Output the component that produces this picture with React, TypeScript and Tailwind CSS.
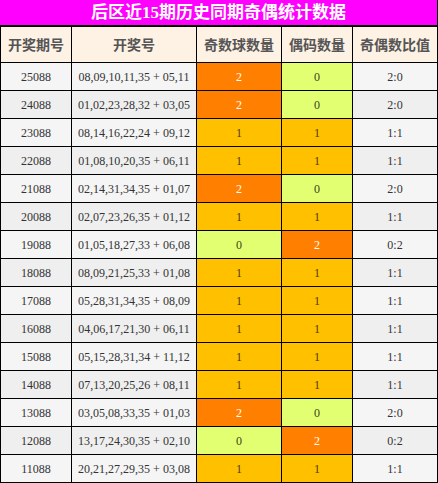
const rows: [string, string, number, number][] = [
  ["25088", "08,09,10,11,35 + 05,11", 2, 0],
  ["24088", "01,02,23,28,32 + 03,05", 2, 0],
  ["23088", "08,14,16,22,24 + 09,12", 1, 1],
  ["22088", "01,08,10,20,35 + 06,11", 1, 1],
  ["21088", "02,14,31,34,35 + 01,07", 2, 0],
  ["20088", "02,07,23,26,35 + 01,12", 1, 1],
  ["19088", "01,05,18,27,33 + 06,08", 0, 2],
  ["18088", "08,09,21,25,33 + 01,08", 1, 1],
  ["17088", "05,28,31,34,35 + 08,09", 1, 1],
  ["16088", "04,06,17,21,30 + 06,11", 1, 1],
  ["15088", "05,15,28,31,34 + 11,12", 1, 1],
  ["14088", "07,13,20,25,26 + 08,11", 1, 1],
  ["13088", "03,05,08,33,35 + 01,03", 2, 0],
  ["12088", "13,17,24,30,35 + 02,10", 0, 2],
  ["11088", "20,21,27,29,35 + 03,08", 1, 1],
];

const countCell = (n: number) => {
  if (n === 2) return "bg-[#ff8000] text-white";
  if (n === 1) return "bg-[#ffc000] text-[#4a3a10]";
  return "bg-[#e2ff72] text-[#3c4420]";
};

const cols = "grid grid-cols-[71px_125px_85px_71px_85px]";
const cell = "flex items-center justify-center border-r border-b border-black";

export default function App() {
  return (
    <div
      className="w-[438px] bg-white"
      style={{ fontFamily: '"Liberation Serif", "Noto Sans CJK SC", serif' }}
    >
      <div className="h-[27px] bg-[#ff00ff] border-r border-b-2 border-black flex items-center justify-center text-white font-bold text-[17px] leading-none">
        后区近15期历史同期奇偶统计数据
      </div>
      <div className="border-l border-black">
        <div
          className={`${cols} h-[36px] bg-[#fef2e4] text-[#555] font-bold text-[14px]`}
          style={{ fontFamily: '"Noto Sans CJK SC", sans-serif' }}
        >
          <div className={cell}>开奖期号</div>
          <div className={cell}>开奖号</div>
          <div className={cell}>奇数球数量</div>
          <div className={cell}>偶码数量</div>
          <div className={cell}>奇偶数比值</div>
        </div>
        {rows.map(([issue, nums, odd, even], i) => (
          <div
            key={issue}
            className={`${cols} h-[28px] text-[12px] text-[#333] ${i % 2 === 0 ? "bg-[#f5f5f5]" : "bg-[#efefef]"}`}
          >
            <div className={cell}>{issue}</div>
            <div className={cell}>{nums}</div>
            <div className={`${cell} ${countCell(odd)}`}>{odd}</div>
            <div className={`${cell} ${countCell(even)}`}>{even}</div>
            <div className={cell}>
              {odd}:{even}
            </div>
          </div>
        ))}
      </div>
    </div>
  );
}
